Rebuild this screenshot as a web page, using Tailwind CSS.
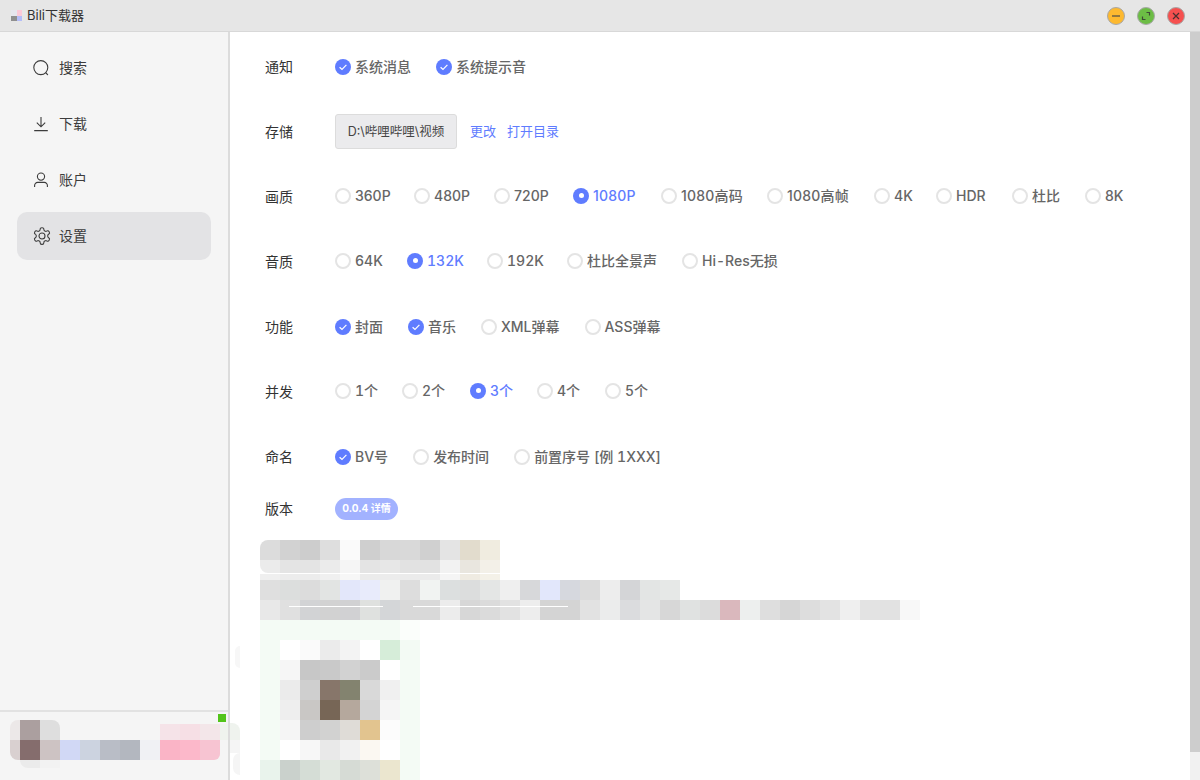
<!DOCTYPE html>
<html lang="zh-CN">
<head>
    <meta charset="UTF-8">
    <title>Bili下载器</title>
    <script src="https://cdn.jsdelivr.net/npm/@tailwindcss/browser@4"></script>
</head>
<body class="h-[780px] w-[1200px] overflow-hidden bg-white font-['Inter','Noto_Sans_CJK_SC',sans-serif] text-[#333]">
    <!-- title bar -->
    <header class="flex h-8 items-center border-b border-[#d8d8d8] bg-[#e6e6e6] pl-[11px] pr-[15px]">
        <div class="grid h-[11px] w-[11px] grid-cols-2 grid-rows-2">
            <i class="bg-[#e6e6ee]"></i><i class="bg-[#fbc9d8]"></i>
            <i class="bg-[#8f8f8f]"></i><i class="bg-[#b4bdf8]"></i>
        </div>
        <span class="ml-[5px] text-[13px] leading-none text-[#333]">Bili下载器</span>
        <div class="ml-auto flex items-center gap-3">
            <button class="flex h-[18px] w-[18px] items-center justify-center rounded-full border border-[#a8a8a8] bg-[#fdb92f]">
                <svg class="h-3 w-3" viewBox="0 0 12 12" fill="none" stroke="#4a4a4a" stroke-width="1.2"><path d="M2 6h8"/></svg>
            </button>
            <button class="flex h-[18px] w-[18px] items-center justify-center rounded-full border border-[#a8a8a8] bg-[#6cbd45]">
                <svg class="h-3 w-3" viewBox="0 0 12 12" fill="none" stroke="#3d4a36" stroke-width="1.2"><path d="M6.5 2.5h3v3M2.5 6.5v3h3"/></svg>
            </button>
            <button class="flex h-[18px] w-[18px] items-center justify-center rounded-full border border-[#a8a8a8] bg-[#f6504f]">
                <svg class="h-3 w-3" viewBox="0 0 12 12" fill="none" stroke="#4a3030" stroke-width="1.2"><path d="M3 3l6 6M9 3l-6 6"/></svg>
            </button>
        </div>
    </header>

    <div class="flex h-[748px]">
        <!-- sidebar -->
        <aside class="relative flex w-[230px] shrink-0 flex-col border-r-2 border-[#dcdcdc] bg-[#f5f5f5]">
            <nav class="flex flex-1 flex-col gap-2 pl-[17px] pr-[17px] pt-3 text-sm text-[#3c3c3c]">
                <a class="flex h-12 items-center gap-[10px] rounded-[10px] pl-4">
                    <svg class="h-4 w-4" viewBox="0 0 16 16" fill="none" stroke="#3c3c3c" stroke-width="1.1"><circle cx="7.8" cy="7.6" r="7"/><path d="M13 13l1.6 1.6" stroke-linecap="round"/></svg>
                    搜索
                </a>
                <a class="flex h-12 items-center gap-[10px] rounded-[10px] pl-4">
                    <svg class="h-4 w-4" viewBox="0 0 16 16" fill="none" stroke="#3c3c3c" stroke-width="1.1"><path d="M8 1v9.5M3.8 6.6L8 10.8l4.2-4.2M1.2 14.6h13.6"/></svg>
                    下载
                </a>
                <a class="flex h-12 items-center gap-[10px] rounded-[10px] pl-4">
                    <svg class="h-4 w-4" viewBox="0 0 16 16" fill="none" stroke="#3c3c3c" stroke-width="1.1"><circle cx="8" cy="4.6" r="3.6"/><path d="M1.6 15v-1.6a3 3 0 0 1 3-3h6.8a3 3 0 0 1 3 3V15"/></svg>
                    账户
                </a>
                <a class="flex h-12 items-center gap-[7px] rounded-[10px] bg-[#e3e3e5] pl-4">
                    <svg class="-ml-px h-5 w-5" viewBox="0 0 24 24" fill="none" stroke="#3c3c3c" stroke-width="1.3"><path d="M12.22 2h-.44a2 2 0 0 0-2 2v.18a2 2 0 0 1-1 1.73l-.43.25a2 2 0 0 1-2 0l-.15-.08a2 2 0 0 0-2.73.73l-.22.38a2 2 0 0 0 .73 2.73l.15.1a2 2 0 0 1 1 1.72v.51a2 2 0 0 1-1 1.74l-.15.09a2 2 0 0 0-.73 2.73l.22.38a2 2 0 0 0 2.73.73l.15-.08a2 2 0 0 1 2 0l.43.25a2 2 0 0 1 1 1.73V20a2 2 0 0 0 2 2h.44a2 2 0 0 0 2-2v-.18a2 2 0 0 1 1-1.73l.43-.25a2 2 0 0 1 2 0l.15.08a2 2 0 0 0 2.73-.73l.22-.39a2 2 0 0 0-.73-2.73l-.15-.08a2 2 0 0 1-1-1.74v-.5a2 2 0 0 1 1-1.74l.15-.09a2 2 0 0 0 .73-2.73l-.22-.38a2 2 0 0 0-2.73-.73l-.15.08a2 2 0 0 1-2 0l-.43-.25a2 2 0 0 1-1-1.73V4a2 2 0 0 0-2-2z"/><circle cx="12" cy="12" r="3.6"/></svg>
                    设置
                </a>
            </nav>
            <!-- blurred account strip -->
            <div class="h-[70px] border-t-2 border-[#e2e2e2] pl-[10px] pt-[8px]" id="account"></div>
            <i class="absolute left-[218px] top-[682px] h-2 w-2 bg-[#52c41a]"></i>
        </aside>

        <!-- settings -->
        <main class="min-w-0 flex-1 overflow-hidden pl-[35px] pt-[2px] text-sm">
            <section class="flex h-[65px] items-center">
                <span class="w-[70px]">通知</span>
                <div class="flex items-center gap-[25px] font-medium text-[#666]">
                    <label class="flex items-center gap-1">
                        <svg class="h-4 w-4" viewBox="0 0 16 16"><circle cx="8" cy="8" r="8" fill="#5f7cff"/><path d="M4.6 8.2l2.4 2.3 4.4-4.6" fill="none" stroke="#fff" stroke-width="1.2"/></svg>
                        系统消息
                    </label>
                    <label class="flex items-center gap-1">
                        <svg class="h-4 w-4" viewBox="0 0 16 16"><circle cx="8" cy="8" r="8" fill="#5f7cff"/><path d="M4.6 8.2l2.4 2.3 4.4-4.6" fill="none" stroke="#fff" stroke-width="1.2"/></svg>
                        系统提示音
                    </label>
                </div>
            </section>

            <section class="flex h-[65px] items-center">
                <span class="w-[70px]">存储</span>
                <div class="flex h-[35px] w-[122px] items-center justify-center rounded-[3px] border border-[#dcdcdc] bg-[#ebebed] text-[12.5px] text-[#444]">D:\哔哩哔哩\视频</div>
                <a class="ml-[13px] text-[13px] text-[#5f7cff]">更改</a>
                <a class="ml-[11px] text-[13px] text-[#5f7cff]">打开目录</a>
            </section>

            <section class="flex h-[65px] items-center">
                <span class="w-[70px]">画质</span>
                <div class="-mt-0.5 flex items-center gap-6 whitespace-nowrap font-medium text-[#666] [&>label>i]:shrink-0">
                    <label class="flex w-[55px] items-center gap-1"><i class="h-4 w-4 rounded-full border-2 border-[#e4e4e4]"></i>360P</label>
                    <label class="flex w-[56px] items-center gap-1"><i class="h-4 w-4 rounded-full border-2 border-[#e4e4e4]"></i>480P</label>
                    <label class="flex w-[55px] items-center gap-1"><i class="h-4 w-4 rounded-full border-2 border-[#e4e4e4]"></i>720P</label>
                    <label class="flex w-[64px] items-center gap-1 tracking-[0.2px] text-[#5f7cff]"><i class="flex h-4 w-4 items-center justify-center rounded-full bg-[#5f7cff]"><b class="h-[5px] w-[5px] rounded-full bg-white"></b></i>1080P</label>
                    <label class="flex w-[82px] items-center gap-1 tracking-[0.2px]"><i class="h-4 w-4 rounded-full border-2 border-[#e4e4e4]"></i>1080高码</label>
                    <label class="flex w-[83px] items-center gap-1 tracking-[0.2px]"><i class="h-4 w-4 rounded-full border-2 border-[#e4e4e4]"></i>1080高帧</label>
                    <label class="flex w-[38px] items-center gap-1"><i class="h-4 w-4 rounded-full border-2 border-[#e4e4e4]"></i>4K</label>
                    <label class="flex w-[52px] items-center gap-1"><i class="h-4 w-4 rounded-full border-2 border-[#e4e4e4]"></i>HDR</label>
                    <label class="flex w-[49px] items-center gap-1"><i class="h-4 w-4 rounded-full border-2 border-[#e4e4e4]"></i>杜比</label>
                    <label class="flex items-center gap-1"><i class="h-4 w-4 rounded-full border-2 border-[#e4e4e4]"></i>8K</label>
                </div>
            </section>

            <section class="flex h-[65px] items-center">
                <span class="w-[70px]">音质</span>
                <div class="-mt-0.5 flex items-center gap-6 whitespace-nowrap font-medium tabular-nums text-[#666] [&>label>i]:shrink-0">
                    <label class="flex w-[48px] items-center gap-1"><i class="h-4 w-4 rounded-full border-2 border-[#e4e4e4]"></i>64K</label>
                    <label class="flex w-[56px] items-center gap-1 text-[#5f7cff]"><i class="flex h-4 w-4 items-center justify-center rounded-full bg-[#5f7cff]"><b class="h-[5px] w-[5px] rounded-full bg-white"></b></i>132K</label>
                    <label class="flex w-[56px] items-center gap-1"><i class="h-4 w-4 rounded-full border-2 border-[#e4e4e4]"></i>192K</label>
                    <label class="flex w-[91px] items-center gap-1"><i class="h-4 w-4 rounded-full border-2 border-[#e4e4e4]"></i>杜比全景声</label>
                    <label class="flex items-center gap-1"><i class="h-4 w-4 rounded-full border-2 border-[#e4e4e4]"></i>Hi-Res无损</label>
                </div>
            </section>

            <section class="flex h-[65px] items-center">
                <span class="w-[70px]">功能</span>
                <div class="flex items-center gap-[25px] font-medium text-[#666]">
                    <label class="flex items-center gap-1">
                        <svg class="h-4 w-4" viewBox="0 0 16 16"><circle cx="8" cy="8" r="8" fill="#5f7cff"/><path d="M4.6 8.2l2.4 2.3 4.4-4.6" fill="none" stroke="#fff" stroke-width="1.2"/></svg>
                        封面
                    </label>
                    <label class="flex items-center gap-1">
                        <svg class="h-4 w-4" viewBox="0 0 16 16"><circle cx="8" cy="8" r="8" fill="#5f7cff"/><path d="M4.6 8.2l2.4 2.3 4.4-4.6" fill="none" stroke="#fff" stroke-width="1.2"/></svg>
                        音乐
                    </label>
                    <label class="flex items-center gap-1"><i class="h-4 w-4 rounded-full border-2 border-[#e4e4e4]"></i>XML弹幕</label>
                    <label class="flex items-center gap-1"><i class="h-4 w-4 rounded-full border-2 border-[#e4e4e4]"></i>ASS弹幕</label>
                </div>
            </section>

            <section class="flex h-[65px] items-center">
                <span class="w-[70px]">并发</span>
                <div class="-mt-0.5 flex items-center gap-6 whitespace-nowrap font-medium tabular-nums text-[#666] [&>label>i]:shrink-0">
                    <label class="flex w-[43px] items-center gap-1"><i class="h-4 w-4 rounded-full border-2 border-[#e4e4e4]"></i>1个</label>
                    <label class="flex w-[44px] items-center gap-1"><i class="h-4 w-4 rounded-full border-2 border-[#e4e4e4]"></i>2个</label>
                    <label class="flex w-[43px] items-center gap-1 text-[#5f7cff]"><i class="flex h-4 w-4 items-center justify-center rounded-full bg-[#5f7cff]"><b class="h-[5px] w-[5px] rounded-full bg-white"></b></i>3个</label>
                    <label class="flex w-[44px] items-center gap-1"><i class="h-4 w-4 rounded-full border-2 border-[#e4e4e4]"></i>4个</label>
                    <label class="flex items-center gap-1"><i class="h-4 w-4 rounded-full border-2 border-[#e4e4e4]"></i>5个</label>
                </div>
            </section>

            <section class="flex h-[65px] items-center">
                <span class="w-[70px]">命名</span>
                <div class="flex items-center gap-[25px] font-medium tabular-nums text-[#666]">
                    <label class="flex items-center gap-1">
                        <svg class="h-4 w-4" viewBox="0 0 16 16"><circle cx="8" cy="8" r="8" fill="#5f7cff"/><path d="M4.6 8.2l2.4 2.3 4.4-4.6" fill="none" stroke="#fff" stroke-width="1.2"/></svg>
                        BV号
                    </label>
                    <label class="flex items-center gap-1"><i class="h-4 w-4 rounded-full border-2 border-[#e4e4e4]"></i>发布时间</label>
                    <label class="flex items-center gap-1"><i class="h-4 w-4 rounded-full border-2 border-[#e4e4e4]"></i>前置序号 [例 1XXX]</label>
                </div>
            </section>

            <section class="flex h-[39px] items-center">
                <span class="w-[70px]">版本</span>
                <span class="flex h-[22px] w-[63px] items-center justify-center rounded-full bg-[#a2b2ff] text-[10px] font-bold text-white">0.0.4 详情</span>
            </section>

            <!-- blurred release notes -->
            <div class="relative -ml-[5px] mt-3" id="notes">
                <i class="absolute -left-[25px] top-[106px] h-[22px] w-[5px] rounded-l-full bg-[#f7f7f7]"></i>
                <i class="absolute -left-[30px] top-[183px] h-[17px] w-[10px] rounded-tr-lg bg-[#eff3ee]"></i>
                <i class="absolute -left-[30px] top-[200px] h-[13px] w-[10px] bg-[#f5f5f5]"></i>
                <i class="absolute -left-[27px] top-[213px] h-[22px] w-[7px] rounded-l-lg bg-[#f5f5f5]"></i>
            </div>
        </main>

        <!-- scrollbar -->
        <div class="flex w-[10px] shrink-0 flex-col bg-[#f1f1f1]">
            <div class="h-[720px] bg-[#cdcdcd]"></div>
        </div>
    </div>

    <script>
        // pixelated (mosaic) regions, one array per row, cell = 20px wide
        const notesRows = [
            { h: 20, cls: 'rounded-tl-lg', cells: ['#dcdcdc','#d2d2d2','#cdcdcd','#dedede','#fafafa','#cfcfcf','#d8d8d8','#d9d9d9','#d0d0d0','#e4e4e4','#e2dccd','#f0ece0'] },
            { h: 13, cls: 'rounded-bl-lg', cells: ['#ebebeb','#e4e4e4','#e4e4e4','#ebebeb','#f5f5f5','#e4e4e4','#e7e7e7','#e2e2e2','#e2e2e2','#f2f2f2','#e9e6df','#f3f0e8'] },
            { h: 1, cells: [] },
            { h: 6, cells: ['#efefef','#ececec','#ececec','#f0f0f0','#f7f7f7','#ebebeb','#ececec','#ebebeb','#ebebeb','#f5f5f5','#efebe2','#f4f1e8'] },
            { h: 20, cells: ['#dfdfdf','#dcdedd','#dcdcdc','#e2e4e3','#e3e7fa','#e8ebfb','#f0f1f0','#dddddd','#f1f3f2','#dcdfdf','#dcdddd','#e4e6e5','#efefef','#d7d8da','#e2e7fb','#d6d8de','#dcdcdc','#ededed','#d4d5d7','#e3e5e4','#e6e8e7'] },
            { h: 20, cells: ['#e8e8e8','#e0e0e0','#d2d3d5','#d2d2d2','#d1d1d3','#dfe1df','#d4d6d8','#d9d9d9','#d9d9d9','#ececec','#d7d7d7','#dbdbdb','#e2e2e2','#ededed','#d4d4d4','#d4d4d4','#e2e2e2','#ebecec','#dbdcde','#e4e5e5','#d7d7d7','#e0e2e1','#dcdcdc','#dab8bd','#edefee','#dedede','#d6d6d6','#dddddd','#e3e3e3','#efefef','#e3e3e3','#e2e2e2','#f8f8f8'] },
            { h: 20, cells: ['#f4fbf5','#f4fbf5','#f4fbf5','#f4fbf5','#f4fbf5','#f4fbf5','#f4fbf5','#fbfefb'] },
            { h: 20, cells: ['#f4fbf5','#ffffff','#fafafa','#ebebeb','#f3f3f3','#ffffff','#d6edd9','#f3faf4'] },
            { h: 20, cells: ['#f4fbf5','#f6f6f6','#c7c7c7','#c9c9c9','#d2d2d2','#cbcbcb','#ffffff','#f4fbf5'] },
            { h: 20, cells: ['#f4fbf5','#ebebeb','#cfcfcf','#87766a','#83836f','#d9d9d9','#f0f0f0','#f4fbf5'] },
            { h: 20, cells: ['#f4fbf5','#eeeeee','#c9c7c5','#776656','#b5a89d','#d4d4d4','#f5f5f5','#f4fbf5'] },
            { h: 20, cells: ['#f4fbf5','#f5f5f5','#cecece','#d2d2d1','#dfdcd7','#e2c48f','#fcfcfc','#f4fbf5'] },
            { h: 20, cells: ['#f4fbf5','#ffffff','#f7f7f7','#e9e9e9','#f1f1f1','#fbf8f2','#ffffff','#f4fbf5'] },
            { h: 20, cells: ['#e9f3ec','#cad1cc','#d5ddd6','#e2e8e1','#d6dbd5','#dde0d9','#ebe6cf','#f4fbf5'] },
        ];
        // "colour:width:radius"; the pink row starts 4px lower than the avatar
        const pink = c => 'linear-gradient(transparent 4px, ' + c + ' 4px)';
        const accountRows = [
            { h: 20, cells: ['#ece8e8:10:8px 0 0 0','#ab9f9f','#dedede:20:0 8px 0 0',null,null,null,null,null,pink('#f5e3e8'),pink('#f6dfe5'),pink('#f3e6e9'),pink('#eff3ee') + ':8'] },
            { h: 20, cells: ['#d9d0d0:10:0 0 0 8px','#856d6d','#cdc3c3','#d1d8f5','#ccd3e0','#b9bdc6','#b3b7bf','#f0f1f4','#fab4c6','#fcb8ca','#f7c4d2:20:0 0 6px 0'] },
            { h: 8, cells: ['transparent:10','#ebebeb:20:0 0 0 8px','#f2f2f2'] },
        ];

        function drawMosaic(el, rows) {
            rows.forEach(row => {
                const line = document.createElement('div');
                line.className = 'flex overflow-hidden ' + (row.cls || '');
                line.style.height = row.h + 'px';
                row.cells.forEach(cell => {
                    const [color, width, radius] = (cell || 'transparent').split(':');
                    const block = document.createElement('i');
                    block.className = 'block shrink-0';
                    block.style.width = (width || 20) + 'px';
                    block.style.background = color;
                    if (radius) block.style.borderRadius = radius;
                    line.appendChild(block);
                });
                el.appendChild(line);
            });
        }

        const notes = document.getElementById('notes');
        drawMosaic(notes, notesRows);
        drawMosaic(document.getElementById('account'), accountRows);

        // thin white streaks left in the blurred text
        [[29, 94], [153, 155]].forEach(([left, width]) => {
            const streak = document.createElement('i');
            streak.className = 'absolute h-px bg-white';
            streak.style.top = '66px';
            streak.style.left = left + 'px';
            streak.style.width = width + 'px';
            notes.appendChild(streak);
        });
    </script>
</body>
</html>
